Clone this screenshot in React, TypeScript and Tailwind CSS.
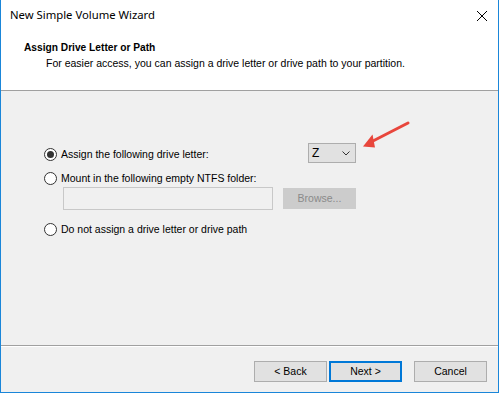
import React from "react";

function Radio({ checked }: { checked?: boolean }) {
  return (
    <span className="w-[13px] h-[13px] rounded-full border border-[#333333] bg-white flex items-center justify-center shrink-0">
      {checked && <span className="w-[7px] h-[7px] rounded-full bg-[#333333]" />}
    </span>
  );
}

function Btn({ children, primary }: { children: React.ReactNode; primary?: boolean }) {
  return (
    <div
      className={
        "w-[73px] h-[21px] flex items-center justify-center bg-[#e1e1e1] text-black " +
        (primary ? "border-2 border-[#0078d7]" : "border border-[#adadad]")
      }
    >
      {children}
    </div>
  );
}

export default function App() {
  return (
    <div
      className="relative w-[499px] h-[393px] bg-[#f0f0f0] border-x border-b border-[#1a86d9] flex flex-col text-[10.5px] text-black overflow-hidden"
      style={{ fontFamily: '"Liberation Sans", Arial, sans-serif' }}
    >
      {/* Title bar */}
      <div className="h-[31px] bg-white flex items-center justify-between pl-[9px] pr-[9px] shrink-0">
        <span className="text-[11.3px] text-black" style={{ fontFamily: '"Noto Sans", sans-serif' }}>
          New Simple Volume Wizard
        </span>
        <svg width="12" height="12" viewBox="0 0 12 12" className="mr-[1px]">
          <path d="M1 1 L11 11 M11 1 L1 11" stroke="#000" strokeWidth="1" fill="none" />
        </svg>
      </div>

      {/* Header */}
      <div className="h-[60px] bg-white border-b border-[#a0a0a0] shrink-0 pt-[10px] pl-[23px]">
        <div className="font-bold text-[10.2px] leading-[14px]">Assign Drive Letter or Path</div>
        <div className="pl-[22px] leading-[14px] mt-[1px]">
          For easier access, you can assign a drive letter or drive path to your partition.
        </div>
      </div>

      {/* Body */}
      <div className="flex-1 pl-[43px] pt-[52px]">
        <div className="flex items-start h-[20px]">
          <div className="w-[264px] flex items-center gap-[4px] pt-[5px]">
            <Radio checked />
            <span className="leading-[13px]">Assign the following drive letter:</span>
          </div>
          <div className="w-[48px] h-[20px] border border-[#adadad] bg-[#e1e1e1] flex items-center justify-between pl-[3px] pr-[5px]">
            <span className="text-[12px]">Z</span>
            <svg width="8" height="5" viewBox="0 0 8 5">
              <path d="M0.5 0.5 L4 4 L7.5 0.5" stroke="#333" strokeWidth="1" fill="none" />
            </svg>
          </div>
        </div>
        <div className="flex items-center gap-[4px] mt-[9px]">
          <Radio />
          <span className="leading-[13px]">Mount in the following empty NTFS folder:</span>
        </div>
        <div className="flex items-start mt-[2px] pl-[19px]">
          <div className="w-[210px] h-[23px] border border-[#c8c8c8] bg-[#f0f0f0]" />
          <div className="ml-[10px] mt-[1px] w-[73px] h-[21px] border border-[#cccccc] bg-[#cccccc] flex items-center justify-center text-[#8a8a8a]">
            Browse...
          </div>
        </div>
        <div className="flex items-center gap-[4px] mt-[13px]">
          <Radio />
          <span className="leading-[13px]">Do not assign a drive letter or drive path</span>
        </div>
      </div>

      {/* Footer */}
      <div className="h-[47px] shrink-0 border-t border-[#a0a0a0] flex flex-col">
        <div className="h-[1px] bg-white" />
        <div className="flex justify-end pr-[11px] pt-[14px]">
          <Btn>&lt; Back</Btn>
          <div className="ml-[2px]">
            <Btn primary>Next &gt;</Btn>
          </div>
          <div className="ml-[12px]">
            <Btn>Cancel</Btn>
          </div>
        </div>
      </div>

      {/* Annotation arrow */}
      <svg className="absolute left-0 top-0 pointer-events-none" width="499" height="393">
        <line x1="407" y1="123" x2="370" y2="142" stroke="#e8463c" strokeWidth="3" strokeLinecap="round" />
        <polygon points="362,146.5 371.5,134.5 374,147.5" fill="#e8463c" />
      </svg>
    </div>
  );
}
